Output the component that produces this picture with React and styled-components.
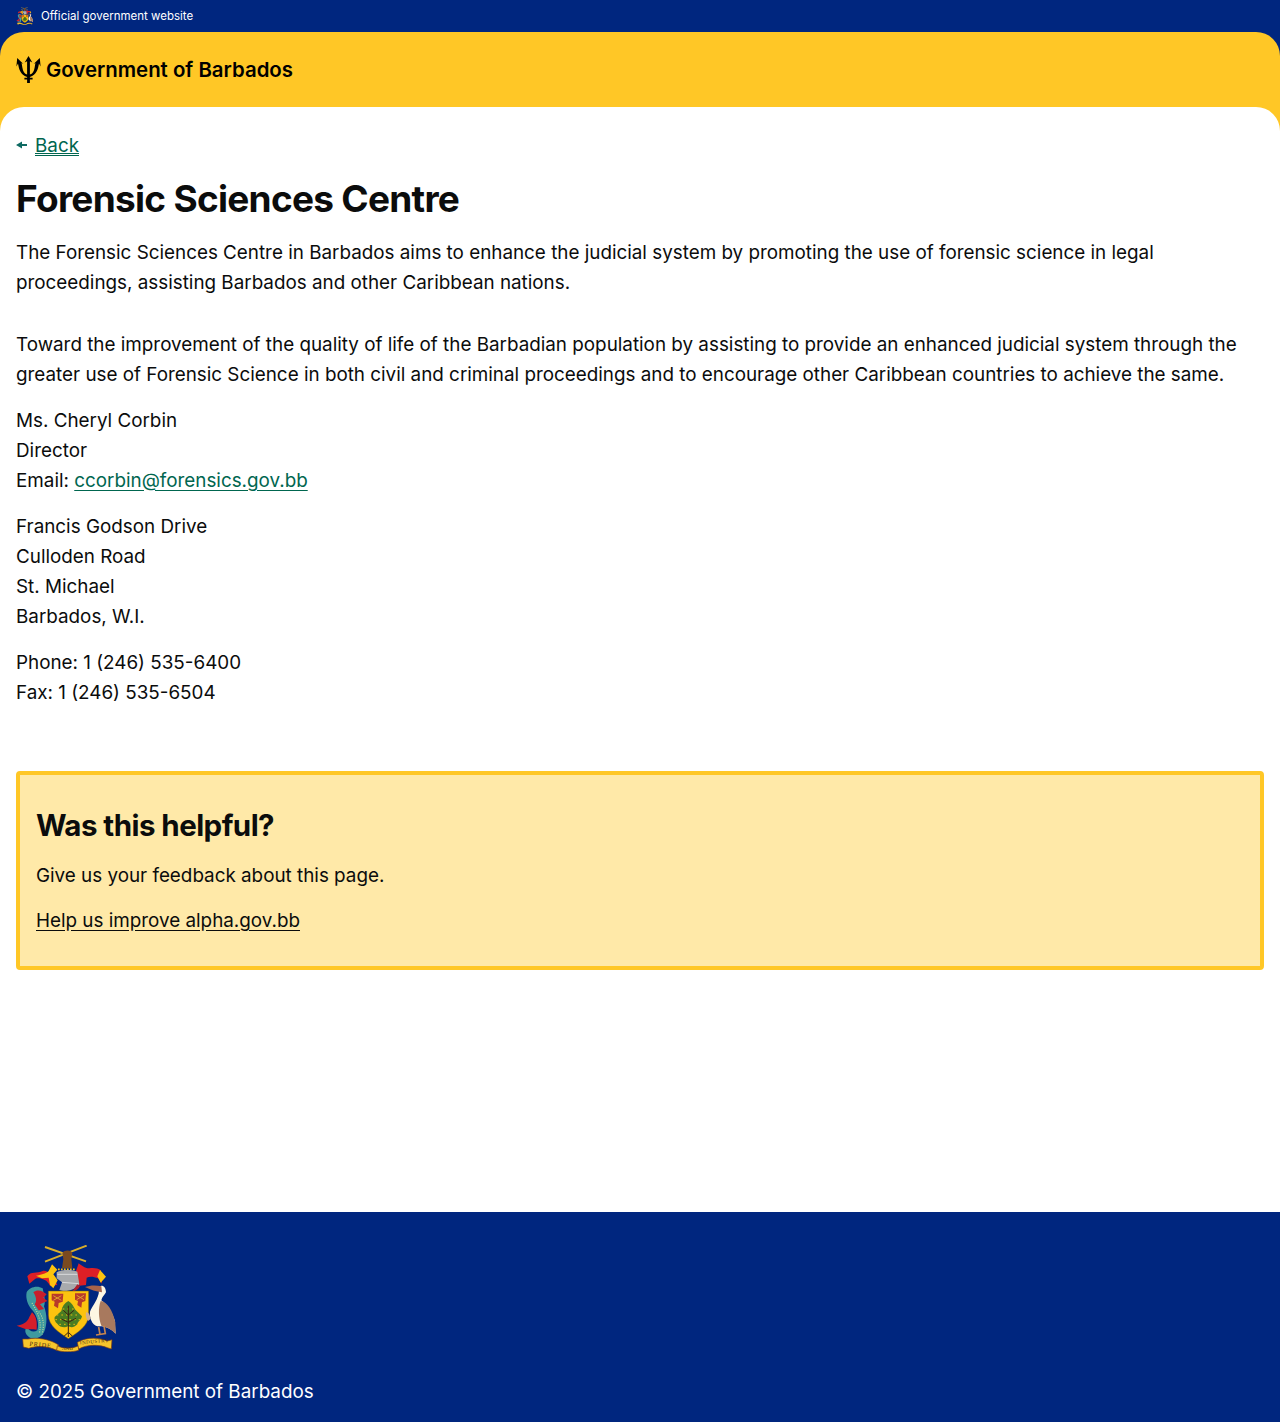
import React from 'react';
import styled, { createGlobalStyle } from 'styled-components';

const GlobalStyle = createGlobalStyle`
  html, body {
    margin: 0;
    padding: 0;
    background: #fff;
  }
  body {
    font-family: "Inter", "Noto Sans", sans-serif;
    color: #0b0c0c;
  }
`;

const Page = styled.div`
  display: flex;
  flex-direction: column;
  min-height: 1422px;
  background: #00267f;
`;

const OfficialBar = styled.div`
  display: flex;
  align-items: center;
  gap: 8px;
  height: 32px;
  padding: 0 16px;
  color: #fff;
  font-size: 11.5px;
`;

const HeaderPanel = styled.div`
  display: flex;
  flex-direction: column;
  flex: 1;
  background: #ffc726;
  border-radius: 24px 24px 0 0;
`;

const Brand = styled.div`
  display: flex;
  align-items: center;
  gap: 5px;
  height: 75px;
  padding: 0 16px;
  font-size: 20.4px;
  font-weight: 600;
  color: #000;
`;

const Main = styled.main`
  flex: 1;
  padding: 23px 16px 0;
  background: #fff;
  border-radius: 24px 24px 0 0;
`;

const BackLink = styled.a`
  display: flex;
  align-items: center;
  gap: 8px;
  height: 30px;
  font-size: 18.84px;
  color: #00664f;
  span {
    text-decoration: underline;
    text-underline-offset: 3px;
  }
`;

const Title = styled.h1`
  margin: 17px 0 17px;
  font-size: 37px;
  line-height: 44px;
  font-weight: 700;
  letter-spacing: -0.72px;
  color: #0b0c0c;
`;

const Text = styled.p`
  margin: 0 0 ${(p) => p.$gap ?? 16}px;
  font-size: 18.84px;
  line-height: 30px;
`;

const Link = styled.a`
  color: ${(p) => p.$color || '#00664f'};
  text-decoration: underline;
  text-underline-offset: 3px;
`;

const Feedback = styled.section`
  box-sizing: border-box;
  height: 199px;
  margin-top: 63px;
  padding: 31px 16px 0;
  background: #ffe9a8;
  border: 4px solid #ffc726;
  border-radius: 4px;
`;

const FeedbackTitle = styled.h2`
  margin: 0 0 17px;
  font-size: 29.5px;
  line-height: 38px;
  font-weight: 700;
  letter-spacing: -0.55px;
`;

const Footer = styled.footer`
  display: flex;
  flex-direction: column;
  align-items: flex-start;
  height: 210px;
  box-sizing: border-box;
  padding: 33px 16px 0;
  background: #00267f;
  color: #fff;
`;

const Copyright = styled.div`
  margin-top: 25px;
  font-size: 18.84px;
  line-height: 30px;
`;

const Trident = () => (
  <svg width="25" height="27" viewBox="0 0 25 27" aria-hidden="true">
    <path
      d="M12.5 0 16.3 6.6 13.9 5.2 13.9 18.6 C16.6 18 18 15.2 18.6 11.8 L19.4 7 L17.6 8 L23.8 2 L24.6 10.4 L23 7.6 C22 13 20.6 19.4 13.9 20.9 L13.9 21.7 L16.6 21.7 L16.6 23.5 L13.9 23.5 L13.9 27 L11.1 27 L11.1 23.5 L8.4 23.5 L8.4 21.7 L11.1 21.7 L11.1 20.9 C4.4 19.4 3 13 2 7.6 L0.4 10.4 L1.2 2 L7.4 8 L5.6 7 L6.4 11.8 C7 15.2 8.4 18 11.1 18.6 L11.1 5.2 L8.7 6.6 Z"
      fill="#000"
    />
  </svg>
);

const ArmsSvg = styled.svg`
  display: block;
  flex-shrink: 0;
`;

// drawn on a 3x grid of the crest
const Arms = ({ width, height, motto }) => (
  <ArmsSvg width={width} height={height} viewBox="48 30 300 321" aria-hidden="true">
    {/* sugar cane and fist */}
    <path d="M135 36 258 79M260 32 135 80" stroke="#d9ae2c" strokeWidth="6" />
    <path d="M187 54 C195 44 212 45 217 54 L214 72 217 100 186 100 190 72Z" fill="#7a4a20" />
    {/* mantling */}
    <path d="M82 124 C92 108 112 116 128 108 C145 104 162 128 172 150 L150 152 C140 132 120 128 106 131 L88 146Z" fill="#dd1f26" />
    <path d="M108 122 C122 120 138 116 146 108 L156 88 172 104 160 118 173 136 160 160 150 150 146 128 126 130Z" fill="#fcc30f" />
    <path d="M228 108 L236 85 C246 92 252 100 268 100 C282 98 294 100 302 106 L306 146 294 130 C280 124 268 124 260 128 L258 150 238 152 232 130Z" fill="#dd1f26" />
    <path d="M300 105 318 125 302 143 292 124Z" fill="#fcc30f" />
    <path d="M174 103 H224" stroke="#fcc30f" strokeWidth="5" strokeDasharray="5 4" />
    {/* helmet */}
    <path d="M170 112 C186 103 216 103 232 110 L238 148 C226 164 196 174 178 165 L186 142 170 130Z" fill="#a8aaad" />
    <path d="M172 118 232 118M186 142 236 146" stroke="#d9dadc" strokeWidth="3" />
    <path d="M232 148 240 154 C234 164 226 168 216 170Z" fill="#b01f2e" />
    {/* dolphin */}
    <path d="M80 172 C88 156 112 150 128 160 C132 180 138 200 132 214 C142 240 142 270 132 292 C124 308 108 314 90 308 C76 300 72 286 80 276 C88 288 100 294 112 286 C118 266 112 242 96 224 C84 212 76 190 80 172Z" fill="#3e9aa0" />
    <path d="M100 172 C112 162 126 166 140 178 L130 188 142 198 120 208 132 222 116 226 104 208 C112 198 108 184 100 172Z" fill="#c81f2c" />
    <path d="M96 232 C108 244 112 256 110 284 C98 282 86 284 76 282 L50 272 C68 270 82 262 88 246Z" fill="#d41f2a" />
    <path d="M96 204 C114 232 126 258 118 296M116 230 C130 246 134 268 126 298" stroke="#c2d89b" strokeWidth="3.5" strokeDasharray="3 4" fill="none" />
    {/* shield */}
    <path d="M145 168 H266 V240 C266 272 232 294 205 311 C178 294 145 272 145 240Z" fill="#fcc30f" stroke="#6b5513" strokeWidth="1.5" />
    {/* pride of barbados flowers */}
    <path d="M155 176 H190 L188 200 176 204 174 220 162 212 164 200 155 196Z" fill="#b83a2a" />
    <path d="M225 175 H258 L256 198 246 202 244 218 232 210 234 198 225 194Z" fill="#b83a2a" />
    <path d="M160 182 184 196M184 182 160 196M230 181 252 194M252 181 230 194" stroke="#e0a030" strokeWidth="3" />
    {/* fig tree */}
    <path d="M205 198 C216 204 220 214 226 224 L246 244 C244 256 234 258 232 268 C222 278 214 278 204 274 C194 280 178 276 172 266 C166 262 162 254 164 246 L184 228 C186 214 194 204 205 198Z" fill="#4a7d22" />
    <path d="M170 240 L240 240M166 254 L242 254M178 268 L230 268M188 222 L222 222" stroke="#fcc30f" strokeWidth="2.5" strokeDasharray="5 9" />
    <path d="M205 212 V292M205 240 190 226M205 240 222 226M205 262 184 252M205 262 228 250M205 292 192 304M205 292 218 304M205 292 205 306" stroke="#3a2412" strokeWidth="3" fill="none" />
    {/* pelican */}
    <path d="M298 154 C308 148 318 156 318 172 C312 182 306 186 304 196 C318 206 336 230 344 256 L347 296 C330 278 312 272 292 274 C276 268 268 250 270 230 C276 214 290 200 296 176Z" fill="#fdf6e3" />
    <path d="M255 156 C270 150 290 150 304 154 L306 172 C290 170 270 164 255 156Z" fill="#a9634a" />
    <path d="M302 198 C322 200 338 226 346 262 L347 296 C334 282 320 276 304 272 C296 250 294 220 302 198Z" fill="#a8795e" />
    <path d="M258 232 C266 232 270 240 272 252 L264 258 C258 252 256 242 258 232Z" fill="#d2b08c" />
    <path d="M312 272 316 296 288 300M296 276 300 298" stroke="#c4844f" strokeWidth="5" fill="none" />
    {/* motto scroll */}
    <path d="M68 312 H84 C110 306 150 312 176 330 L170 346 C140 332 112 332 86 340 L70 336Z" fill="#f6c52c" stroke="#7a3a14" strokeWidth="2" />
    <path d="M172 332 C190 342 216 342 236 332 L236 346 C216 352 190 352 170 346Z" fill="#f6c52c" stroke="#7a3a14" strokeWidth="2" />
    <path d="M232 322 C262 304 300 308 322 318 L336 314 334 342 322 338 C296 328 262 328 236 342Z" fill="#f6c52c" stroke="#7a3a14" strokeWidth="2" />
    {motto && (
      <g fontFamily="Liberation Serif, serif" fill="#4a2c10">
        <text x="88" y="332" fontSize="19" transform="rotate(6 88 332)" textLength="64">PRIDE</text>
        <text x="186" y="345" fontSize="15">AND</text>
        <text x="240" y="328" fontSize="15" transform="rotate(-5 240 328)" textLength="86">INDUSTRY</text>
      </g>
    )}
  </ArmsSvg>
);

const BackArrow = () => (
  <svg width="11" height="8" viewBox="0 0 11 8" aria-hidden="true">
    <path d="M0 4 6 0.5 V3 H11 V5 H6 V7.5Z" fill="#0e6a62" />
  </svg>
);

export default function App() {
  return (
    <Page>
      <GlobalStyle />
      <OfficialBar>
        <Arms width={17} height={18} />
        Official government website
      </OfficialBar>
      <HeaderPanel>
        <Brand>
          <Trident />
          Government of Barbados
        </Brand>
        <Main>
          <BackLink href="#">
            <BackArrow />
            <span>Back</span>
          </BackLink>
          <Title>Forensic Sciences Centre</Title>
          <Text $gap={32}>
            The Forensic Sciences Centre in Barbados aims to enhance the judicial system by promoting the use of forensic science in legal proceedings, assisting Barbados and other Caribbean nations.
          </Text>
          <Text>
            Toward the improvement of the quality of life of the Barbadian population by assisting to provide an enhanced judicial system through the greater use of Forensic Science in both civil and criminal proceedings and to encourage other Caribbean countries to achieve the same.
          </Text>
          <Text>
            Ms. Cheryl Corbin<br />
            Director<br />
            Email: <Link href="#">ccorbin@forensics.gov.bb</Link>
          </Text>
          <Text>
            Francis Godson Drive<br />
            Culloden Road<br />
            St. Michael<br />
            Barbados, W.I.
          </Text>
          <Text>
            Phone: 1 (246) 535-6400<br />
            Fax: 1 (246) 535-6504
          </Text>
          <Feedback>
            <FeedbackTitle>Was this helpful?</FeedbackTitle>
            <Text $gap={15}>Give us your feedback about this page.</Text>
            <Text>
              <Link href="#" $color="#0b0c0c">Help us improve alpha.gov.bb</Link>
            </Text>
          </Feedback>
        </Main>
      </HeaderPanel>
      <Footer>
        <Arms width={100} height={107} motto />
        <Copyright>© 2025 Government of Barbados</Copyright>
      </Footer>
    </Page>
  );
}
